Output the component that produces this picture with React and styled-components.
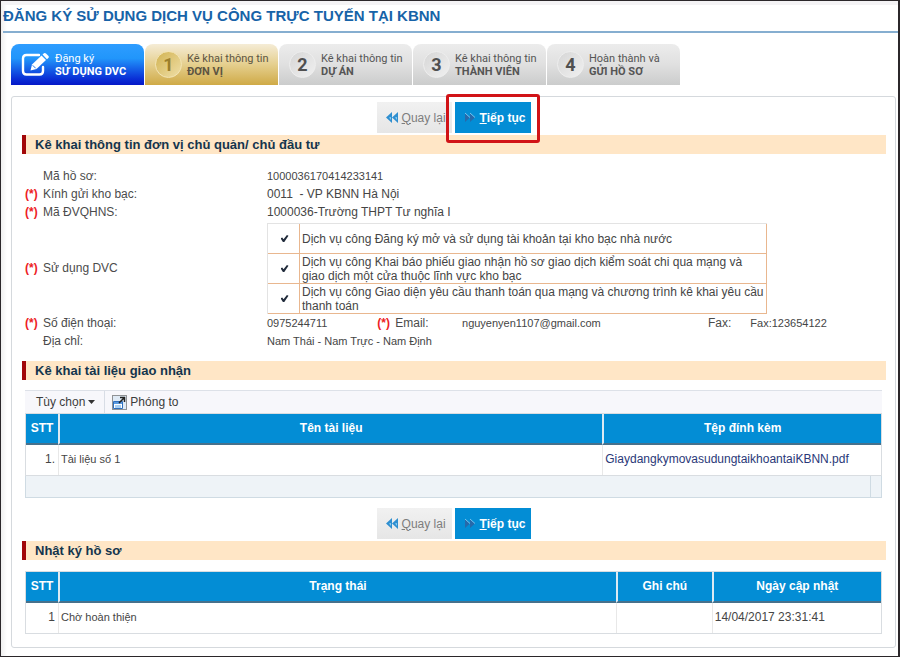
import React from "react";
import styled, { createGlobalStyle, css } from "styled-components";

const GlobalStyle = createGlobalStyle`
  *, *::before, *::after { box-sizing: border-box; }
  body {
    margin: 0;
    background: #fff;
    color: #454545;
    font: 12px/18px "Liberation Sans", Arial, sans-serif;
  }
  button, input { font: inherit; }
`;

const Page = styled.div`
  min-height: 100vh;
  border: 1px solid #2b272a;
  border-right-width: 2px;
  background: linear-gradient(to right, #efefef, #fff 6px);
`;

const PageTitle = styled.h1`
  margin: 0 0 0 2px;
  padding: 3px 0 7px;
  border-top: 4px solid #f4f3f5;
  border-bottom: 2px solid #86aed0;
  color: #1763a8;
  font-size: 15px;
  line-height: 16px;
`;

const Steps = styled.ol`
  display: flex;
  gap: 1px;
  margin: 11px 0 11px 10px;
  padding: 0;
  list-style: none;
`;

const stepTones = {
  active: css`
    background: linear-gradient(#2e9dff, #2196fb 35%, #0a2fd6 85%, #0518c8);
    color: #fff;
  `,
  next: css`
    background: linear-gradient(#f5ecd6, #e5cf8e 50%, #cfaa47);
    color: #5d5542;
  `,
  idle: css`
    background: linear-gradient(#ececec, #e0e0e0 50%, #cbcccc);
    color: #555;
  `,
};

const Step = styled.li`
  display: flex;
  align-items: center;
  flex: 0 1 133px;
  gap: 5px;
  height: 41px;
  padding-left: 10px;
  border-radius: 8px 8px 0 0;
  font: 11px/13px Roboto, sans-serif;
  white-space: nowrap;
  ${(p) => stepTones[p.$tone]}
`;

const StepText = styled.span`
  display: flex;
  flex-direction: column;
  padding-top: 1px;
`;

const StepNumber = styled.span`
  display: grid;
  place-items: center;
  flex: none;
  width: 27px;
  height: 27px;
  border: 1px solid ${(p) => (p.$gold ? "#f3e4b4" : "#eee")};
  border-radius: 50%;
  background: ${(p) =>
    p.$gold
      ? "linear-gradient(135deg, #d2b352, #efdfa8)"
      : "linear-gradient(135deg, #d6d6d6, #f0f0f0)"};
  color: ${(p) => (p.$gold ? "#9c7f2c" : "#505050")};
  font-size: 18px;
  font-weight: 700;
`;

const Panel = styled.main`
  margin: 0 2px 7px 10px;
  padding: 5px 9px 13px 10px;
  border: 1px solid #d5d9dd;
  border-radius: 3px;
  background: #fff;
`;

const Actions = styled.div`
  display: flex;
  justify-content: center;
  gap: 3px;
  padding-bottom: 2px;
`;

const ActionButton = styled.button`
  display: flex;
  align-items: center;
  gap: 4px;
  height: 31px;
  padding: 0 6px 0 9px;
  border: 0;
  background: linear-gradient(#f1f1f1, #e6e6e6);
  color: #7d7d7d;
  cursor: pointer;

  ${(p) =>
    p.$primary &&
    css`
      padding-right: 6px;
      background: #038dd5;
      color: #fff;
      font-weight: 700;
    `}
`;

const Highlighted = styled.div`
  position: relative;

  &::after {
    content: "";
    position: absolute;
    inset: -8px -9px -10px;
    border: 3px solid #d11317;
    border-radius: 3px;
    pointer-events: none;
  }
`;

const SectionTitle = styled.h2`
  margin: 0;
  padding-left: 9px;
  border-left: 4px solid #a20709;
  background: #ffe6c6;
  color: #14354d;
  font-size: 13px;
  line-height: 19px;
`;

const Form = styled.dl`
  display: grid;
  grid-template-columns: 242px 13fr 10fr 29fr 5fr 16fr;
  align-items: center;
  margin: 0;
  padding: 13px 0 11px 3px;

  dt { color: #4b4b4b; }
  dd { margin: 0; }
`;

const Term = styled.dt`
  display: grid;
  grid-template-columns: 18px 1fr;
`;

const Value = styled.dd`
  grid-column: ${(p) => (p.$wide ? "2 / -1" : "auto")};
  font-size: ${(p) => (p.$small ? "11px" : "12px")};
  white-space: nowrap;
`;

const Required = styled.span`
  color: #ed1c24;
  font-weight: 700;
`;

const Services = styled.table`
  width: 500px;
  max-width: 100%;
  margin-top: 2px;
  border-top: 1px solid #e3e3e3;
  border-left: 1px solid #e3e3e3;
  border-spacing: 0;
  line-height: 14px;
  white-space: normal;

  td {
    height: 30px;
    padding: 0 0 0 2px;
    border: solid #e9b78f;
    border-width: 0 1px 1px 0;
  }
  td:first-child { width: 32px; }
  label { display: block; }
`;

const Check = styled.input`
  appearance: none;
  display: block;
  width: 8px;
  height: 7px;
  margin: 0 auto;

  &:checked {
    background: #202b3b;
    clip-path: polygon(0 45%, 22% 35%, 38% 60%, 80% 0, 100% 10%, 48% 100%, 30% 100%);
  }
`;

const TableBlock = styled.div`
  margin: ${(p) => (p.$log ? "11px 4px 0 3px" : "10px 4px 10px 3px")};
`;

const Toolbar = styled.div`
  display: flex;
  height: 23px;
  border-top: 1px solid #dde1e8;
  background: #f7f7fb;
`;

const ToolButton = styled.button`
  display: flex;
  align-items: center;
  gap: 3px;
  padding: 0 9px 0 11px;
  border: 0;
  border-right: 1px solid ${(p) => (p.$last ? "transparent" : "#d8dde5")};
  background: none;
  color: #3c3c3c;
  cursor: pointer;

  ${(p) => p.$last && css`padding-left: 7px;`}
`;

const DataTable = styled.table`
  width: 100%;
  table-layout: fixed;
  border: 1px solid #d9dde1;
  border-spacing: 0;

  th {
    height: 31px;
    padding: 0 0 2px;
    border-left: 2px solid #dceaf3;
    border-bottom: 2px solid #47718c;
    background: #038dd5;
    color: #fff;
  }
  th:first-child { border-left: 0; }

  td {
    height: 30px;
    padding: 0 0 2px 2px;
    border-left: 1px solid #e8e8e8;
  }
  td:first-child {
    padding: 0 3px 2px 0;
    border-left: 0;
    text-align: right;
  }
  td:nth-child(2) { font-size: 11px; }

  a { color: #2a3878; text-decoration: none; }
`;

const Column = styled.col`
  width: ${(p) => p.$width};
`;

const TableFooter = styled.div`
  height: 22px;
  padding-right: 10px;
  border: 1px solid #cfdbe3;
  border-top: 0;
  background: #eef3f7;

  &::before {
    content: "";
    display: block;
    height: 100%;
    border-right: 1px solid #cfdbe3;
  }
`;

const EditIcon = () => (
  <svg width="29" height="25" viewBox="0 0 29 25" fill="none" aria-hidden="true">
    <path d="M18 3H5.500Q2 3 2 6.500V19Q2 22.500 5.500 22.500H18.500Q22 22.500 22 19V15" stroke="#fff" strokeWidth="2.400" strokeLinecap="round" />
    <path d="M9.500 18.500 11 12.500 20.500 3.500 25 8 15.500 17Z" fill="#fff" />
    <path d="M21.500 2.500 23 1.200Q24 .500 25 1.500L27.500 4Q28.300 5 27.500 5.800L26 7.200Z" fill="#fff" />
    <path d="M11.700 13.300 14.700 16.300" stroke="#1b76ee" />
  </svg>
);

const BackIcon = () => (
  <svg width="12" height="11" viewBox="0 0 12 11" aria-hidden="true">
    <path d="M6 0V11L0 5.500ZM12 0V11L6 5.500Z" fill="#2f8fd0" />
    <path d="M5 5V8L3 5.500ZM11 5V8L9 5.500Z" fill="#8bcdf2" />
  </svg>
);

const NextIcon = () => (
  <svg width="12" height="11" viewBox="0 0 12 11" aria-hidden="true">
    <path d="M1 1V10L6 5.500ZM6 1V10L11 5.500Z" fill="#2769aa" />
    <path d="M1 1 6 5.500M6 1 11 5.500" stroke="#75c5f0" />
  </svg>
);

const CaretIcon = () => (
  <svg width="7" height="4" viewBox="0 0 7 4" aria-hidden="true">
    <path d="M0 0H7L3.500 4Z" fill="#333" />
  </svg>
);

const ExpandIcon = () => (
  <svg width="15" height="15" viewBox="0 0 15 15" fill="none" aria-hidden="true">
    <path d="M.500 .500H14.500V14.500H.500Z" fill="#dfeaf5" stroke="#333" strokeDasharray="1 1" />
    <path d="M1.500 6.500H10.500V13.500H1.500Z" fill="#fff" stroke="#2f6fbd" />
    <path d="M2 7H10V9H2Z" fill="#5a9ae0" />
    <path d="M3 10H9V13H3Z" fill="#a9d0f3" />
    <path d="M7 8 12 3M8 2.500H12.500V7" stroke="#222" strokeWidth="1.500" />
  </svg>
);

const steps = [
  { tone: "active", line: "Đăng ký", name: "SỬ DỤNG DVC" },
  { tone: "next", number: 1, line: "Kê khai thông tin", name: "ĐƠN VỊ" },
  { tone: "idle", number: 2, line: "Kê khai thông tin", name: "DỰ ÁN" },
  { tone: "idle", number: 3, line: "Kê khai thông tin", name: "THÀNH VIÊN" },
  { tone: "idle", number: 4, line: "Hoàn thành và", name: "GỬI HỒ SƠ" },
];

const services = [
  "Dịch vụ công Đăng ký mở và sử dụng tài khoản tại kho bạc nhà nước",
  "Dịch vụ công Khai báo phiếu giao nhận hồ sơ giao dịch kiểm soát chi qua mạng và giao dịch một cửa thuộc lĩnh vực kho bạc",
  "Dịch vụ công Giao diện yêu cầu thanh toán qua mạng và chương trình kê khai yêu cầu thanh toán",
];

function Label({ required, children }) {
  return (
    <Term>
      <Required>{required ? "(*)" : ""}</Required>
      <span>{children}</span>
    </Term>
  );
}

function BackButton() {
  return (
    <ActionButton type="button">
      <BackIcon />
      <span><u>Q</u>uay lại</span>
    </ActionButton>
  );
}

function NextButton() {
  return (
    <ActionButton type="button" $primary>
      <NextIcon />
      <span><u>T</u>iếp tục</span>
    </ActionButton>
  );
}

export default function App() {
  return (
    <Page>
      <GlobalStyle />
      <PageTitle>ĐĂNG KÝ SỬ DỤNG DỊCH VỤ CÔNG TRỰC TUYẾN TẠI KBNN</PageTitle>
      <Steps>
        {steps.map((s) => (
          <Step key={s.name} $tone={s.tone}>
            {s.number ? (
              <StepNumber $gold={s.tone === "next"}>{s.number}</StepNumber>
            ) : (
              <EditIcon />
            )}
            <StepText>
              <span>{s.line}</span>
              <strong>{s.name}</strong>
            </StepText>
          </Step>
        ))}
      </Steps>
      <Panel>
        <Actions>
          <BackButton />
          <Highlighted><NextButton /></Highlighted>
        </Actions>
        <SectionTitle>Kê khai thông tin đơn vị chủ quản/ chủ đầu tư</SectionTitle>
        <Form>
          <Label>Mã hồ sơ:</Label>
          <Value $wide $small>1000036170414233141</Value>
          <Label required>Kính gửi kho bạc:</Label>
          <Value $wide>0011 &nbsp;- VP KBNN Hà Nội</Value>
          <Label required>Mã ĐVQHNS:</Label>
          <Value $wide>1000036-Trường THPT Tư nghĩa I</Value>
          <Label required>Sử dụng DVC</Label>
          <Value $wide>
            <Services>
              <tbody>
                {services.map((text, i) => (
                  <tr key={text}>
                    <td><Check type="checkbox" id={`service-${i}`} defaultChecked /></td>
                    <td><label htmlFor={`service-${i}`}>{text}</label></td>
                  </tr>
                ))}
              </tbody>
            </Services>
          </Value>
          <Label required>Số điện thoại:</Label>
          <Value $small>0975244711</Value>
          <Label required>Email:</Label>
          <Value $small>nguyenyen1107@gmail.com</Value>
          <dt>Fax:</dt>
          <Value $small>Fax:123654122</Value>
          <Label>Địa chỉ:</Label>
          <Value $wide $small>Nam Thái - Nam Trực - Nam Định</Value>
        </Form>

        <SectionTitle>Kê khai tài liệu giao nhận</SectionTitle>
        <TableBlock>
          <Toolbar>
            <ToolButton type="button">Tùy chọn <CaretIcon /></ToolButton>
            <ToolButton type="button" $last><ExpandIcon /> Phóng to</ToolButton>
          </Toolbar>
          <DataTable>
            <colgroup>
              <Column $width="32px" />
              <Column $width="auto" />
              <Column $width="32.6%" />
            </colgroup>
            <thead>
              <tr><th>STT</th><th>Tên tài liệu</th><th>Tệp đính kèm</th></tr>
            </thead>
            <tbody>
              <tr>
                <td>1.</td>
                <td>Tài liệu số 1</td>
                <td><a href="#file">GiaydangkymovasudungtaikhoantaiKBNN.pdf</a></td>
              </tr>
            </tbody>
          </DataTable>
          <TableFooter />
        </TableBlock>
        <Actions>
          <BackButton />
          <NextButton />
        </Actions>
        <SectionTitle>Nhật ký hồ sơ</SectionTitle>
        <TableBlock $log>
          <DataTable>
            <colgroup>
              <Column $width="32px" />
              <Column $width="auto" />
              <Column $width="11.2%" />
              <Column $width="19.8%" />
            </colgroup>
            <thead>
              <tr><th>STT</th><th>Trạng thái</th><th>Ghi chú</th><th>Ngày cập nhật</th></tr>
            </thead>
            <tbody>
              <tr>
                <td>1</td>
                <td>Chờ hoàn thiện</td>
                <td />
                <td>14/04/2017 23:31:41</td>
              </tr>
            </tbody>
          </DataTable>
        </TableBlock>
      </Panel>
    </Page>
  );
}
